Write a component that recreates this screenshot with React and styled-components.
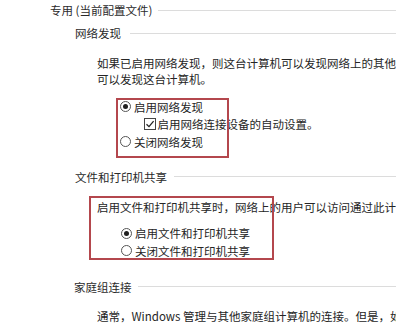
import React from "react";
import styled, { createGlobalStyle } from "styled-components";

const Global = createGlobalStyle`
  body {
    margin: 0;
    background: #fff;
    overflow: hidden;
    font-family: "Noto Sans CJK SC", "Liberation Sans", sans-serif;
    font-size: 11.5px;
    color: #262626;
  }
`;

const Page = styled.div`
  width: 396px;
  height: 325px;
  overflow: hidden;
  padding: 2px 0 0 50px;
  box-sizing: border-box;
`;

const Heading = styled.div`
  display: flex;
  align-items: center;
  gap: ${(p) => p.$gap || 7}px;
  height: 16px;
  line-height: 16px;
  margin-top: ${(p) => p.$top || 0}px;
  margin-left: ${(p) => p.$indent || 0}px;
  white-space: nowrap;
  color: #2a2a2a;

  &::after {
    content: "";
    flex: 1;
    height: 1px;
    background: #dcdcdc;
  }
`;

const Para = styled.p`
  margin: ${(p) => p.$top || 14}px 0 0 ${(p) => (p.$flush ? 0 : 47)}px;
  line-height: 16px;
  white-space: nowrap;
  color: #252525;
`;

const Highlight = styled.div`
  position: relative;
  width: ${(p) => p.$w}px;
  margin: ${(p) => p.$top}px 0 0 ${(p) => p.$left}px;
  padding: 0 0 7px 4px;
  box-sizing: border-box;

  &::after {
    content: "";
    position: absolute;
    inset: 0;
    border: 2px solid #b4474d;
    pointer-events: none;
  }
`;

const Group = styled.div`
  position: relative;
  margin-left: 47px;
`;

const Outline = styled.span`
  position: absolute;
  left: -8px;
  top: -3px;
  width: 185px;
  height: 64px;
  box-sizing: border-box;
  border: 2px solid #b4474d;
  pointer-events: none;
`;

const Option = styled.label`
  display: flex;
  align-items: center;
  gap: ${(p) => p.$gap || 3}px;
  height: 17.5px;
  margin-left: ${(p) => p.$indent || 0}px;
  white-space: nowrap;
  color: #252525;
`;

const Radio = styled.span`
  width: 11px;
  height: 11px;
  border-radius: 50%;
  border: 1px solid #555;
  box-sizing: border-box;
  display: flex;
  align-items: center;
  justify-content: center;
  background: #fff;
  flex: none;

  &::before {
    content: "";
    width: 5px;
    height: 5px;
    border-radius: 50%;
    background: ${(p) => (p.$checked ? "#1f1f1f" : "transparent")};
  }
`;

const Box = styled.span`
  width: 12px;
  height: 12px;
  border: 1px solid #444;
  box-sizing: border-box;
  flex: none;
  display: flex;
  align-items: center;
  justify-content: center;
`;

const Check = () => (
  <svg width="10" height="10" viewBox="0 0 10 10">
    <path d="M1.5 5.2 L4 7.6 L8.6 2.2" fill="none" stroke="#222" strokeWidth="1.3" />
  </svg>
);

const Options = styled.div`
  margin: 10px 0 0 24px;
`;

export default function App() {
  return (
    <Page>
      <Global />
      <Heading $gap={6}>专用 (当前配置文件)</Heading>
      <Heading $top={7} $indent={25} $gap={9}>网络发现</Heading>
      <Para $top={14}>
        如果已启用网络发现，则这台计算机可以发现网络上的其他计算机和设备，而其他网络计算机亦
        <br />
        可以发现这台计算机。
      </Para>
      <Highlight $top={11} $left={66} $w={113}>
        <Option>
          <Radio $checked />
          启用网络发现
        </Option>
        <Option $indent={23.5} $gap={2}>
          <Box>
            <Check />
          </Box>
          启用网络连接设备的自动设置。
        </Option>
        <Option>
          <Radio />
          关闭网络发现
        </Option>
      </Highlight>
      <Heading $top={11} $indent={25} $gap={7}>文件和打印机共享</Heading>
      <Group>
        <Para $top={14} $flush>
          启用文件和打印机共享时，网络上的用户可以访问通过此计算机共享的文件和打印机。
        </Para>
        <Options>
          <Option>
            <Radio $checked />
            启用文件和打印机共享
          </Option>
          <Option>
            <Radio />
            关闭文件和打印机共享
          </Option>
        </Options>
        <Outline />
      </Group>
      <Heading $top={19} $indent={24} $gap={6}>家庭组连接</Heading>
      <Para $top={13}>
        通常，Windows 管理与其他家庭组计算机的连接。但是，如果你在所有计算机上使用相同的用户帐户
      </Para>
    </Page>
  );
}
